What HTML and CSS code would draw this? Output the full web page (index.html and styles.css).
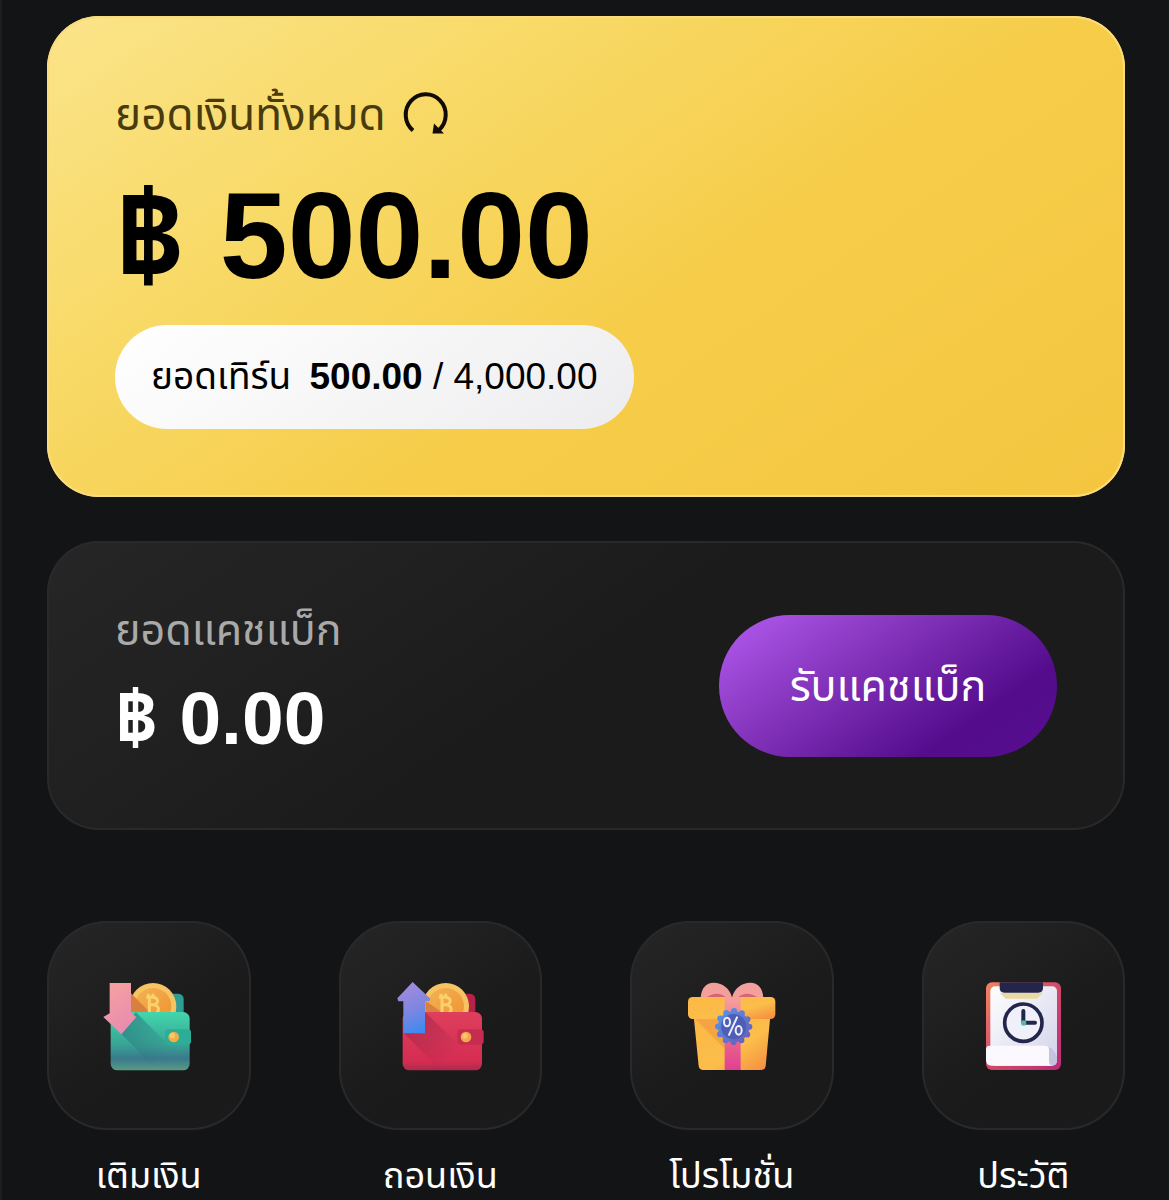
FILE: index.html
```html
<!DOCTYPE html>
<html lang="th">
  <head>
    <meta charset="UTF-8" />
    <meta name="viewport" content="width=device-width, initial-scale=1.0" />
    <title>Wallet</title>
    <link rel="stylesheet" href="styles.css">
  </head>

  <body>
    <main class="wallet">
      <section class="card balance">
        <div class="balance-title">
          <h2>ยอดเงินทั้งหมด</h2>
          <button class="refresh" aria-label="รีเฟรช">
            <svg viewBox="0 0 48 48">
              <path d="M11 39.500A20 20.500 0 1 1 37 39" fill="none" stroke="#120a05" stroke-width="4" />
              <path d="M32 32.500L42 42.500H30.500Z" fill="#120a05" />
            </svg>
          </button>
        </div>
        <p class="amount">฿ 500.00</p>
        <p class="turnover">ยอดเทิร์น <strong>500.00</strong> / 4,000.00</p>
      </section>

      <section class="card cashback">
        <div class="cashback-info">
          <h2>ยอดแคชแบ็ก</h2>
          <p class="amount-sm">฿ 0.00</p>
        </div>
        <button class="claim">รับแคชแบ็ก</button>
      </section>

      <nav class="menu">
        <a href="#deposit">
          <span class="tile">
            <svg viewBox="0 0 360 360">
              <defs>
                <linearGradient id="green" x1="0" y1="0" x2="0" y2="1">
                  <stop offset="0" stop-color="#43d6ac" />
                  <stop offset="0.550" stop-color="#38a595" />
                  <stop offset="0.800" stop-color="#39798c" />
                  <stop offset="1" stop-color="#5a9c84" />
                </linearGradient>
                <linearGradient id="green-shade" x1="0" y1="0" x2="1" y2="1">
                  <stop offset="0" stop-color="#286f7c" />
                  <stop offset="0.800" stop-color="#286f7c" stop-opacity="0" />
                </linearGradient>
                <linearGradient id="pink" x1="0" y1="0" x2="0.400" y2="1">
                  <stop offset="0" stop-color="#f6a3a0" />
                  <stop offset="1" stop-color="#e98cae" />
                </linearGradient>
                <linearGradient id="coin" x1="0" y1="0" x2="1" y2="1">
                  <stop offset="0" stop-color="#f2b354" />
                  <stop offset="1" stop-color="#f0912f" />
                </linearGradient>
              </defs>
              <rect x="228" y="83" width="56" height="90" rx="16" fill="#2f9c95" />
              <circle cx="192" cy="121" r="70" fill="#f6c463" />
              <circle cx="192" cy="121" r="55" fill="url(#coin)" />
              <path d="M126 82L182 138H126Z" fill="#d9803f" />
              <g fill="none" stroke="#fbd06d" stroke-width="9">
                <path d="M172 94H190C212 94 210 116 190 116C216 116 213 144 190 144M181 94V142M183 116H190M178 83V94M192 83V94" />
              </g>
              <rect x="65" y="138" width="237" height="175" rx="20" fill="url(#green)" />
              <path d="M140 138L256 254L240 312H205L97 204Z" fill="url(#green-shade)" opacity="0.700" />
              <rect x="228" y="190" width="78" height="46" rx="10" fill="#2cad98" />
              <circle cx="254" cy="213" r="16" fill="#f0ae45" />
              <circle cx="250" cy="209" r="8" fill="#f7c968" />
              <path d="M62 51H126V142L142 153L97 205L43 153L62 142Z" fill="url(#pink)" />
            </svg>
          </span>
          <span class="label">เติมเงิน</span>
        </a>
        <a href="#withdraw">
          <span class="tile">
            <svg viewBox="0 0 360 360">
              <defs>
                <linearGradient id="red" x1="0" y1="0" x2="0" y2="1">
                  <stop offset="0" stop-color="#de3f5c" />
                  <stop offset="0.850" stop-color="#d52d52" />
                  <stop offset="1" stop-color="#aa2b4c" />
                </linearGradient>
                <linearGradient id="red-shade" x1="0" y1="0" x2="1" y2="1">
                  <stop offset="0" stop-color="#972347" />
                  <stop offset="0.800" stop-color="#972347" stop-opacity="0" />
                </linearGradient>
                <linearGradient id="blue" x1="0.300" y1="0" x2="0.600" y2="1">
                  <stop offset="0" stop-color="#a58bdc" />
                  <stop offset="0.550" stop-color="#7d86e0" />
                  <stop offset="1" stop-color="#3d8af0" />
                </linearGradient>
              </defs>
              <rect x="230" y="83" width="56" height="90" rx="16" fill="#b72347" />
              <circle cx="197" cy="121" r="70" fill="#f6c463" />
              <circle cx="197" cy="121" r="55" fill="url(#coin)" />
              <path d="M136 104L184 138H136Z" fill="#d9803f" />
              <g fill="none" stroke="#fbd06d" stroke-width="9">
                <path d="M177 94H195C217 94 215 116 195 116C221 116 218 144 195 144M186 94V142M188 116H195M183 83V94M197 83V94" />
              </g>
              <rect x="68" y="138" width="238" height="175" rx="20" fill="url(#red)" />
              <path d="M135 138L250 250L240 312H180L72 202Z" fill="url(#red-shade)" opacity="0.700" />
              <rect x="232" y="190" width="79" height="46" rx="10" fill="#c62c50" />
              <circle cx="258" cy="213" r="16" fill="#f2a94c" />
              <circle cx="255" cy="210" r="8" fill="#f9c46d" />
              <path d="M98 48L151 98L148 106H135V202H70V106H55L52 97Z" fill="url(#blue)" />
            </svg>
          </span>
          <span class="label">ถอนเงิน</span>
        </a>
        <a href="#promotion">
          <span class="tile">
            <svg viewBox="0 0 360 360">
              <defs>
                <linearGradient id="box" x1="0" y1="0" x2="1" y2="1">
                  <stop offset="0" stop-color="#fdb844" />
                  <stop offset="0.600" stop-color="#fbbd4b" />
                  <stop offset="1" stop-color="#f58a3e" />
                </linearGradient>
                <linearGradient id="ribbon" x1="0" y1="0" x2="0" y2="1">
                  <stop offset="0" stop-color="#f7a09c" />
                  <stop offset="0.500" stop-color="#ef6f8a" />
                  <stop offset="1" stop-color="#e03f92" />
                </linearGradient>
                <linearGradient id="badge" x1="0" y1="0" x2="1" y2="1">
                  <stop offset="0" stop-color="#5596e8" />
                  <stop offset="1" stop-color="#6a5cb8" />
                </linearGradient>
              </defs>
              <path d="M86 96C88 58 112 42 145 54C165 62 177 78 180 96Z" fill="#f3a09c" />
              <path d="M274 96C272 58 248 42 215 54C195 62 183 78 180 96Z" fill="#f3a09c" />
              <path d="M104 94C124 80 146 80 162 94ZM256 94C236 80 214 80 198 94Z" fill="#d96277" />
              <path d="M65 150H295L281 300Q279 312 266 312H94Q82 312 80 300Z" fill="url(#box)" />
              <path d="M70 160L158 248V160Z" fill="#ec9440" opacity="0.550" />
              <rect x="48" y="93" width="262" height="66" rx="14" fill="url(#box)" />
              <path d="M158 93H206V312H158Z" fill="url(#ribbon)" />
              <circle cx="185" cy="182" r="47" fill="url(#badge)" stroke="url(#badge)" stroke-width="18" stroke-linecap="round" stroke-dasharray="0 24.600" />
              <circle cx="185" cy="182" r="38" fill="#4f5eb5" />
              <g fill="none" stroke="#eef0ff" stroke-width="6">
                <path d="M196 152L170 209" />
                <ellipse cx="165" cy="168" rx="9" ry="13" />
                <ellipse cx="200" cy="193" rx="9" ry="13" />
              </g>
            </svg>
          </span>
          <span class="label">โปรโมชั่น</span>
        </a>
        <a href="#history">
          <span class="tile">
            <svg viewBox="0 0 360 360">
              <defs>
                <linearGradient id="board" x1="0" y1="0" x2="1" y2="1">
                  <stop offset="0" stop-color="#f28563" />
                  <stop offset="0.500" stop-color="#d04a6a" />
                  <stop offset="1" stop-color="#b92c76" />
                </linearGradient>
                <linearGradient id="paper" x1="0" y1="0" x2="1" y2="1">
                  <stop offset="0" stop-color="#ffffff" />
                  <stop offset="1" stop-color="#d2d2ea" />
                </linearGradient>
              </defs>
              <rect x="69" y="49" width="225" height="263" rx="18" fill="url(#board)" />
              <rect x="82" y="61" width="200" height="238" rx="14" fill="url(#paper)" />
              <path d="M110 80H240L222 98H128Z" fill="#ead9a0" />
              <path d="M110 49H240V66Q240 80 226 80H124Q110 80 110 66Z" fill="#24254b" />
              <circle cx="181" cy="170" r="56" fill="#f0f0fa" stroke="#24254b" stroke-width="11" />
              <path d="M181 135V170H216" fill="none" stroke="#24254b" stroke-width="12" stroke-linecap="round" stroke-linejoin="round" />
              <circle cx="182" cy="171" r="8" fill="#52bba8" />
              <path d="M258 250Q258 238 268 250L282 270V285Q280 299 266 299H250Z" fill="#c4c4df" />
              <path d="M69 250Q69 239 80 239H246Q258 239 258 253V285Q258 299 270 299H86Q69 299 69 282Z" fill="#fbf9fd" />
            </svg>
          </span>
          <span class="label">ประวัติ</span>
        </a>
      </nav>
    </main>
  </body>
</html>
```
FILE: styles.css
```css
body {
  margin: 0;
  border-left: 2px solid #1d1e21;
  font-family: "Liberation Sans", "Noto Sans Thai", "Noto Sans", sans-serif;
  background-color: #131416;
  color: #fff;
}

h2,
p {
  margin: 0;
}

h2 {
  font-size: 44px;
  font-weight: 400;
  line-height: 60px;
}

button {
  border: none;
  padding: 0;
  font-family: inherit;
  cursor: pointer;
}

.wallet {
  padding: 16px 44px 0 45px;
}

.card {
  box-sizing: border-box;
  border-radius: 52px;
  padding: 0 68px;
}

/* Balance */
.balance {
  height: 481px;
  padding-top: 69px;
  background: linear-gradient(145deg, #fbe48a 0%, #f8da68 28%, #f6cc48 60%, #f4c640 100%);
  box-shadow: inset 0 0 0 2px #fbdc7c;
  color: #000;
}

.balance-title {
  display: flex;
  align-items: center;
  gap: 16px;
}

.balance-title h2 {
  color: #4a3b0c;
}

.refresh {
  width: 48px;
  height: 48px;
  background: none;
}

.refresh svg {
  display: block;
}

.amount {
  margin-top: 23px;
  font-size: 122px;
  font-weight: 700;
  line-height: 136px;
}

.turnover {
  display: inline-block;
  box-sizing: border-box;
  height: 104px;
  margin-top: 21px;
  padding: 0 36px;
  border-radius: 52px;
  background: linear-gradient(145deg, #fff, #ededef);
  font-size: 37px;
  line-height: 104px;
  white-space: nowrap;
}

.turnover strong {
  margin-left: 8px;
}

/* Cashback */
.cashback {
  display: flex;
  justify-content: space-between;
  align-items: center;
  height: 289px;
  margin-top: 44px;
  background: linear-gradient(145deg, #262626, #1b1b1b 50%);
  box-shadow: inset 0 0 0 2px #29292b;
}

.cashback-info {
  padding-bottom: 14px;
}

.cashback h2 {
  font-size: 43px;
  color: #a9a9a9;
}

.amount-sm {
  margin-top: 18px;
  font-size: 75px;
  font-weight: 700;
  line-height: 80px;
}

.claim {
  width: 338px;
  height: 142px;
  padding-top: 4px;
  border-radius: 71px;
  background: linear-gradient(145deg, #b45cf0 0%, #8031b8 40%, #540c8c 75%, #560f8e 100%);
  color: #fff;
  font-size: 43px;
}

/* Menu */
.menu {
  display: grid;
  grid-template-columns: repeat(4, 1fr);
  gap: 88px;
  margin-top: 91px;
}

.menu a {
  color: #fff;
  text-align: center;
  text-decoration: none;
}

.tile {
  display: flex;
  justify-content: center;
  align-items: center;
  height: 209px;
  border-radius: 60px;
  background: linear-gradient(145deg, #262626, #1a1a1a 60%);
  box-shadow: inset 0 0 0 2px #29292b;
}

.tile svg {
  width: 120px;
  height: 120px;
}

.label {
  display: block;
  margin-top: 22px;
  font-size: 36px;
  line-height: 48px;
  white-space: nowrap;
}
```
